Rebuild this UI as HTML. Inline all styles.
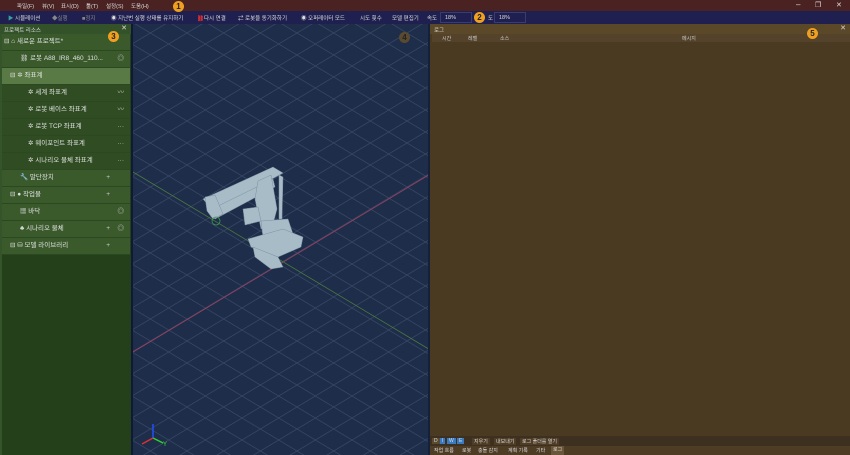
<!DOCTYPE html>
<html><head><meta charset="utf-8">
<style>
*{margin:0;padding:0;box-sizing:border-box}
body{width:850px;height:455px;overflow:hidden;background:#1d2a45;font-family:"Liberation Sans","Noto Sans CJK KR",sans-serif;font-size:6px;color:#d8d8d8;position:relative}
.abs{position:absolute}
#title{left:0;top:0;width:850px;height:11px;background:#4a2222}
#title span{position:absolute;top:2px;font-size:5.5px;color:#ddd}
#tb{left:0;top:11px;width:850px;height:13px;background:#1f2050}
#tb span{position:absolute;top:3px;font-size:5.5px;color:#ddd;white-space:nowrap}
.badge{position:absolute;z-index:5;width:11px;height:11px;border-radius:50%;background:#f0a020;color:#222;font-size:8px;font-weight:bold;text-align:center;line-height:11px}
#left{left:0;top:24px;width:131px;height:431px;background:#24401a;border-left:2px solid #34552a}
#lhead{left:0;top:24px;width:131px;height:10px;background:#34522a;font-size:5.5px;padding:2px 4px;color:#ddd}
.row{position:absolute;left:2px;width:128px;height:17px;border-bottom:1px solid #2c4820;background:#3a5a2c;font-size:6.5px;color:#e0e0e0;line-height:16px;white-space:nowrap}
.row.c{background:#2f4c22}
.row.sel{background:#5a7a45}
.row .r{position:absolute;right:6px;top:0;color:#ccc}
#view{left:131px;top:24px;width:299px;height:431px;background:#1e2d49;border-left:2px solid #101a35;border-right:2px solid #15203a}
#log{left:430px;top:24px;width:420px;height:431px;background:#4a3a22}
#lh{left:430px;top:24px;width:420px;height:10px;background:#5a4828;font-size:5.5px;padding:2px 4px}
#cols{left:432px;top:34px;width:418px;height:8px;background:#54432a;font-size:5px;color:#ccc}
#cols span{position:absolute;top:1px}
#lbar{left:430px;top:436px;width:420px;height:10px;background:#3e3020}
#tabs{left:430px;top:446px;width:420px;height:9px;background:#4e3c25}
.t{position:absolute;font-size:5px;color:#ddd;padding:0 2px;white-space:nowrap}
</style></head><body>
<div id="title" class="abs">
<span style="left:17px">파일(F)</span><span style="left:42px">뷰(V)</span><span style="left:61px">표시(D)</span><span style="left:86px">툴(T)</span><span style="left:106px">설정(S)</span><span style="left:131px">도움(H)</span>
<span style="left:796px;top:0;font-size:8px">–</span><span style="left:815px;top:1px;font-size:7px">❐</span><span style="left:836px;top:1px;font-size:7px">✕</span>
</div>
<div class="badge" style="left:173px;top:1px">1</div>
<div id="tb" class="abs">
<span style="left:8px"><b style="color:#3aa0a0">▶</b> 시뮬레이션</span>
<span style="left:52px;color:#888">◆실행</span>
<span style="left:82px;color:#888">■정지</span>
<span style="left:111px">◉ 지난번 실행 상태를 유지하기</span>
<span style="left:197px"><b style="color:#e03030">⛓</b>다시 연결</span>
<span style="left:238px">⇄ 로봇을 동기화하기</span>
<span style="left:301px">◉ 오퍼레이터 모드</span>
<span style="left:360px">시도 횟수</span>
<span style="left:392px">모델 편집기</span>
<span style="left:427px">속도</span>
<span style="left:440px;top:1px;width:32px;height:11px;border:1px solid #3a3c70;padding:2px 4px">18%</span>
<span style="left:488px">도</span>
<span style="left:494px;top:1px;width:32px;height:11px;border:1px solid #3a3c70;padding:2px 4px">18%</span>
</div>
<div class="badge" style="left:474px;top:12px">2</div>

<div id="left" class="abs"></div>
<div id="lhead" class="abs">프로젝트 리소스<span style="position:absolute;right:4px;top:0;font-size:7px">✕</span></div>
<div class="badge" style="left:108px;top:31px">3</div>
<div class="row" style="top:34px;padding-left:2px">⊟ ⌂ 새로운 프로젝트*</div>
<div class="row" style="top:51px;padding-left:18px">⛓ 로봇 A88_IR8_460_110...<span class="r">◎</span></div>
<div class="row sel" style="top:68px;padding-left:8px">⊟ ✲ 좌표계</div>
<div class="row c" style="top:85px;padding-left:26px">✲ 세계 좌표계<span class="r">〰</span></div>
<div class="row c" style="top:102px;padding-left:26px">✲ 로봇 베이스 좌표계<span class="r">〰</span></div>
<div class="row c" style="top:119px;padding-left:26px">✲ 로봇 TCP 좌표계<span class="r">···</span></div>
<div class="row c" style="top:136px;padding-left:26px">✲ 웨이포인트 좌표계<span class="r">···</span></div>
<div class="row c" style="top:153px;padding-left:26px">✲ 시나리오 물체 좌표계<span class="r">···</span></div>
<div class="row" style="top:170px;padding-left:18px">🔧 말단장치<span class="r" style="right:20px">+</span></div>
<div class="row" style="top:187px;padding-left:8px">⊟ ● 작업물<span class="r" style="right:20px">+</span></div>
<div class="row" style="top:204px;padding-left:18px">▦ 바닥<span class="r">◎</span></div>
<div class="row" style="top:221px;padding-left:18px">♣ 시나리오 물체<span class="r" style="right:20px">+</span><span class="r">◎</span></div>
<div class="row" style="top:238px;padding-left:8px">⊟ ⛁ 모델 라이브러리<span class="r" style="right:20px">+</span></div>

<div id="view" class="abs">
<svg width="295" height="431" style="position:absolute;left:0;top:0">
<defs><pattern id="g" patternUnits="userSpaceOnUse" width="36.667" height="22" x="-1" y="328">
<path d="M0 0L36.667 22M0 22L36.667 0" stroke="#3e4c6c" stroke-width="0.6" fill="none"/></pattern></defs>
<rect width="295" height="431" fill="url(#g)"/>
<line x1="0" y1="328" x2="299" y2="149" stroke="#a04060" stroke-width="0.8"/>
<line x1="0" y1="148" x2="299" y2="327" stroke="#4a7a40" stroke-width="0.8"/>
<g transform="translate(0,115)">
<g fill="#a8bcc8" stroke="#7a90a0" stroke-width="0.5">
<polygon points="70,60 140,28 150,34 80,72"/>
<polygon points="75,72 140,40 142,48 82,80"/>
<polygon points="72,58 82,56 90,75 80,80 74,72"/>
<polygon points="125,42 138,36 144,70 140,85 128,90 122,60"/>
<polygon points="146,36 150,38 149,80 146,80"/>
<polygon points="110,70 125,68 128,82 112,86"/>
<polygon points="128,82 155,80 160,95 130,98"/>
<polygon points="115,100 150,90 170,98 168,108 145,118 118,108"/>
<polygon points="120,108 145,118 150,128 138,130 122,118"/>
</g>
<circle cx="83" cy="82" r="4" fill="none" stroke="#3a9a50" stroke-width="0.8"/>
</g>
<text x="30" y="422" fill="#30e030" font-size="6">Y</text>
<path d="M20 414V400" stroke-width="1.5" fill="none" stroke="#2050ff"/>
<path d="M20 414L30 419" stroke="#30d030" stroke-width="1.5"/>
<path d="M20 414L9 420" stroke="#e03030" stroke-width="1.5"/>
</svg>
<div class="badge" style="left:266px;top:8px;background:#5a4a30;color:#222">4</div>
</div>

<div id="log" class="abs"></div>
<div id="lh" class="abs">로그<span style="position:absolute;right:4px;top:0;font-size:7px">✕</span></div>
<div id="cols" class="abs"><span style="left:10px">시간</span><span style="left:36px">레벨</span><span style="left:68px">소스</span><span style="left:250px">메시지</span></div>
<div class="badge" style="left:807px;top:28px">5</div>
<div id="lbar" class="abs">
<span class="t" style="left:2px;top:2px;background:#5a4a30">D</span><span class="t" style="left:10px;top:2px;background:#3a7ac0">I</span><span class="t" style="left:17px;top:2px;background:#3a7ac0">W</span><span class="t" style="left:27px;top:2px;background:#3a7ac0">E</span>
<span class="t" style="left:42px;top:2px;background:#4e3c25">지우기</span><span class="t" style="left:64px;top:2px;background:#4e3c25">내보내기</span><span class="t" style="left:90px;top:2px;background:#4e3c25">로그 폴더를 열기</span>
</div>
<div id="tabs" class="abs">
<span class="t" style="left:2px;top:1px">작업 흐름</span><span class="t" style="left:30px;top:1px">로봇</span><span class="t" style="left:46px;top:1px">충돌 감지</span><span class="t" style="left:76px;top:1px">계획 기록</span><span class="t" style="left:104px;top:1px">기타</span><span class="t" style="left:121px;top:0;background:#6a5638;height:9px">로그</span>
</div>
</body></html>
